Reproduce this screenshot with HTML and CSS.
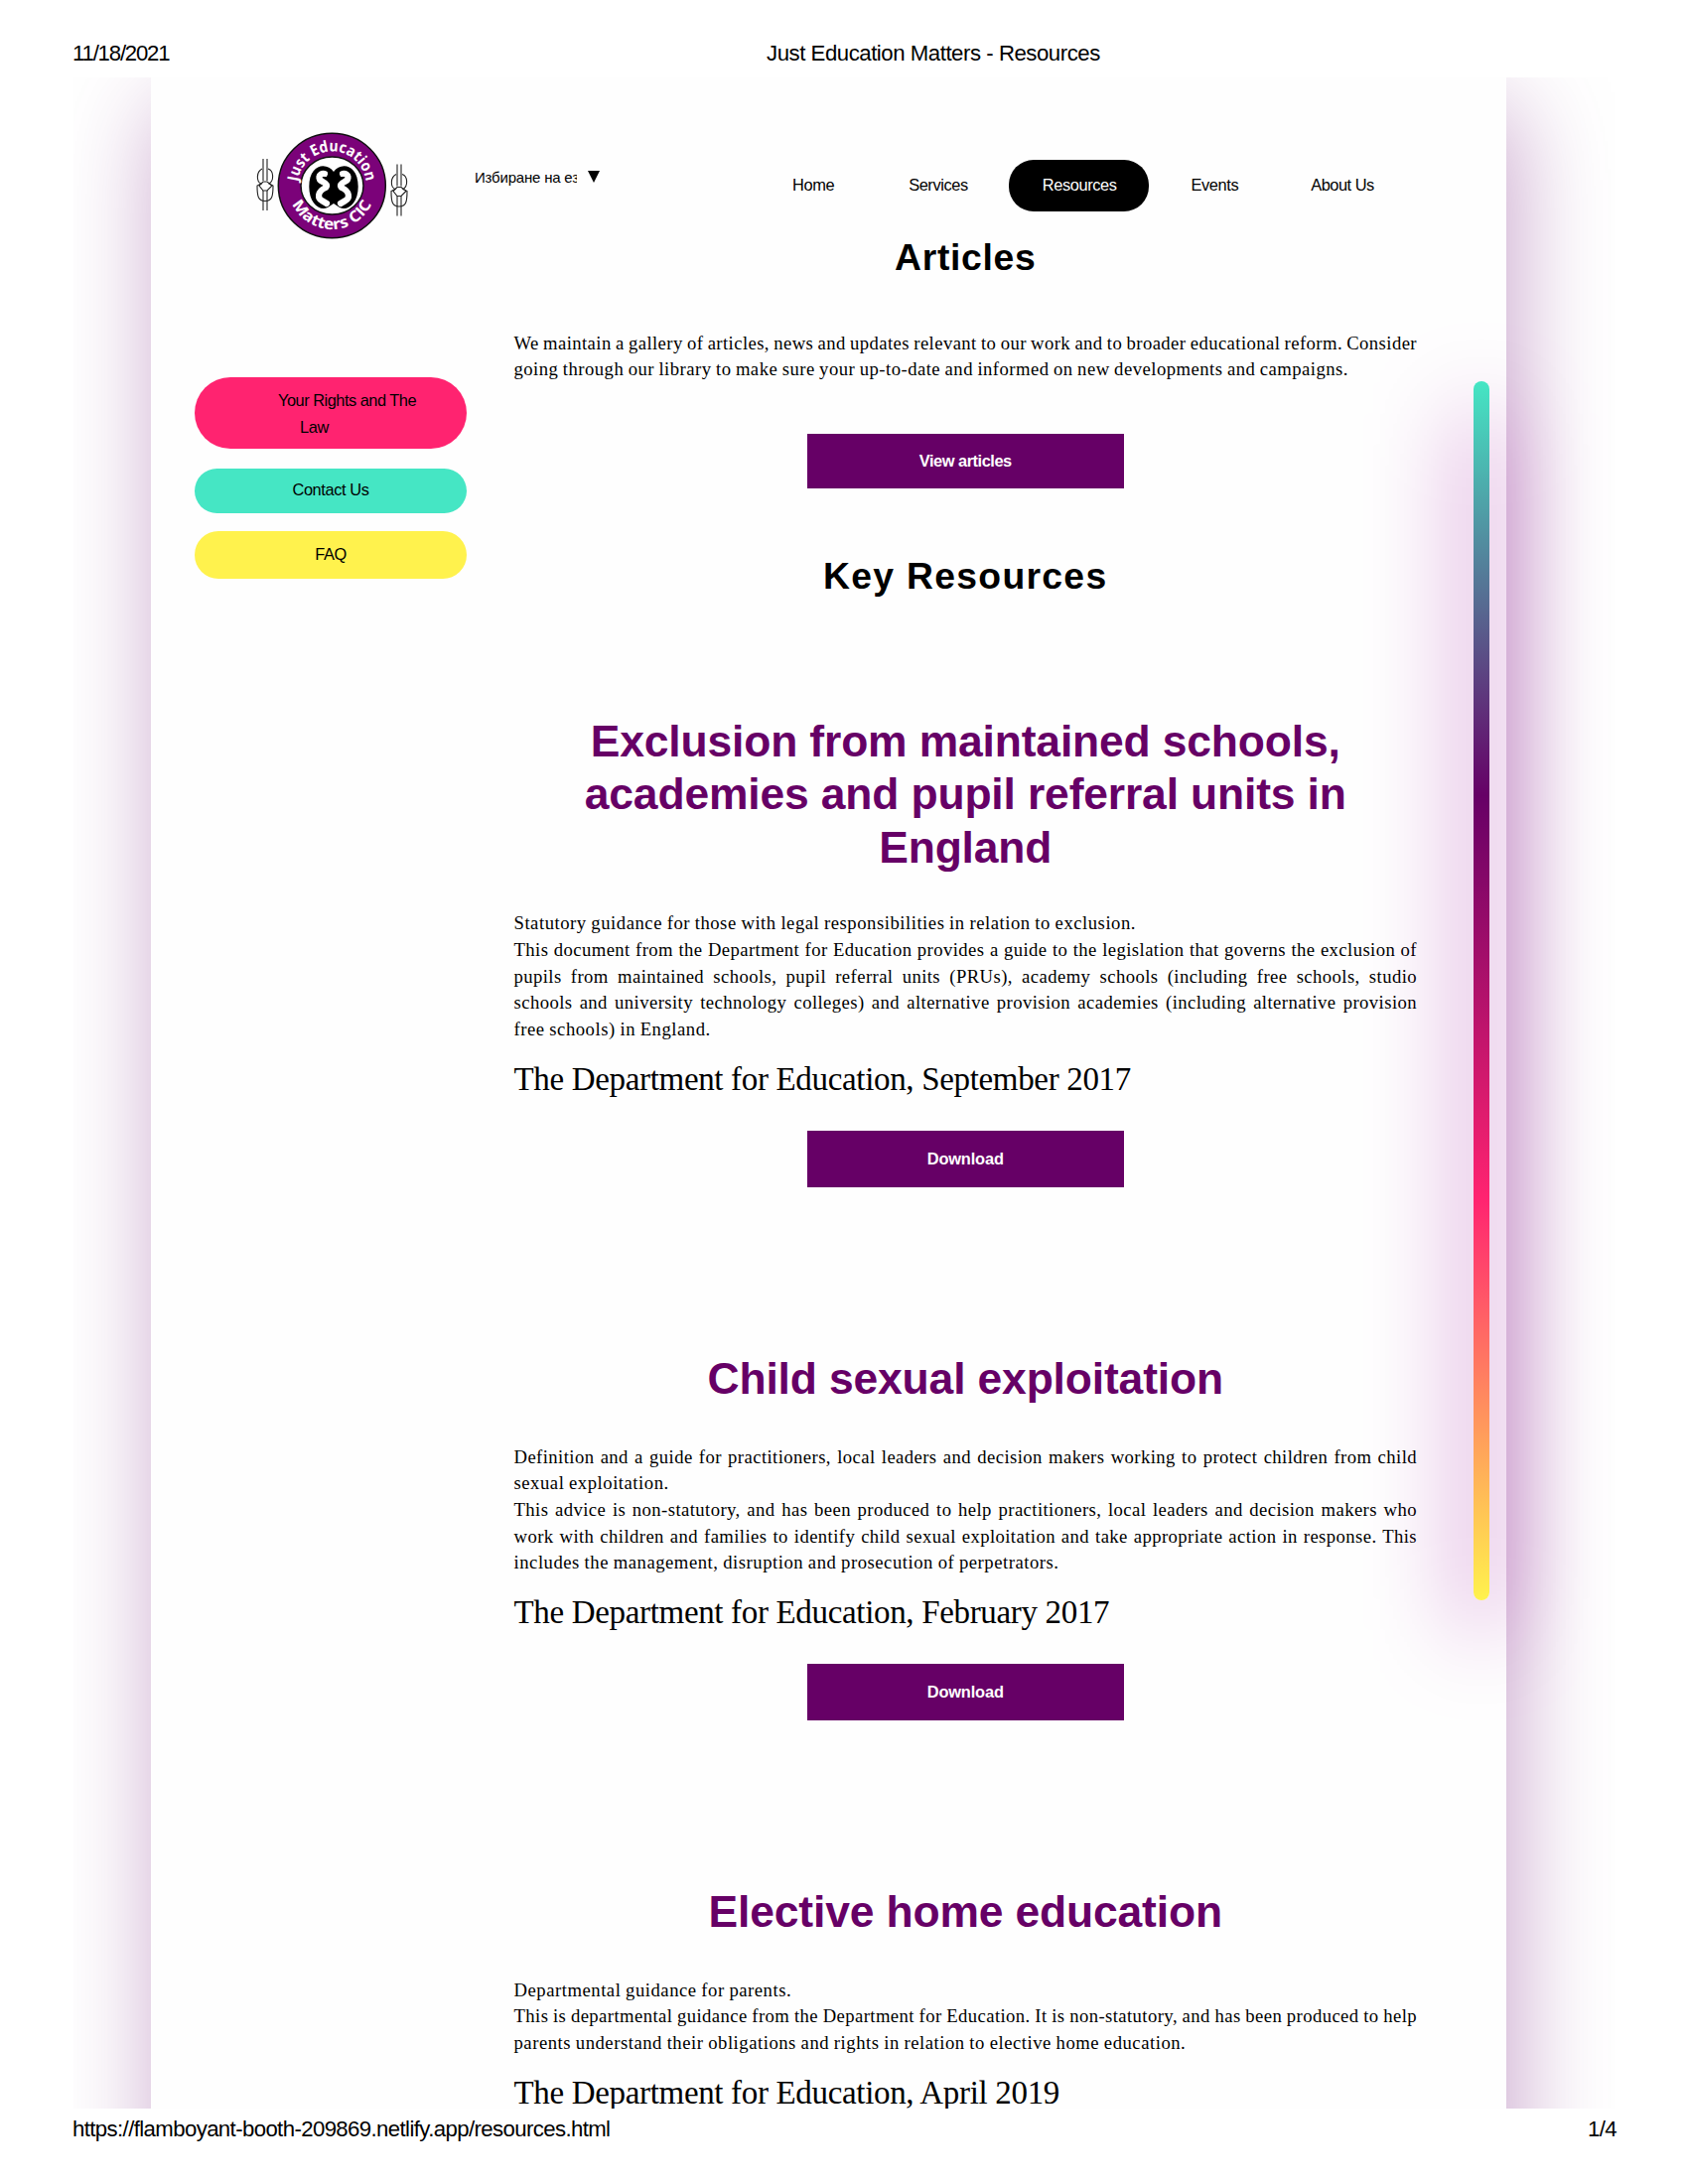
FILE: index.html
```html
<!DOCTYPE html>
<html lang="en">
<head>
<meta charset="utf-8">
<title>Just Education Matters - Resources</title>
<link rel="stylesheet" href="styles.css">
</head>
<body>
<header class="print-head"><span class="date">11/18/2021</span><span class="doc-title">Just Education Matters - Resources</span></header>
<main class="sheet">
  <div class="panel">
    <div class="topbar">
      <svg class="logo" width="156" height="112" viewBox="0 0 156 112" aria-label="Just Education Matters CIC">
        <defs>
          <path id="arc-top" d="M41.800 55A34.500 34.500 0 0 1 110.800 55"/>
          <path id="arc-bottom" d="M32.300 55A44 44 0 0 0 120.300 55"/>
        </defs>
        <ellipse cx="76.300" cy="55" rx="54" ry="52.700" fill="#7b0279" stroke="#111" stroke-width="1.500"/>
        <ellipse cx="76.500" cy="55" rx="31.500" ry="29" fill="#fff" stroke="#111" stroke-width="1.500"/>
        <path d="M78 41C71 31 53.300 33 53.300 56C53.300 73 64 81 72 77L78 73L84 77C92 81 102.700 73 102.700 56C102.700 33 85 31 78 41Z" fill="#000"/>
        <path d="M69 43C62 42 62 49 67 51Q73 54 70 57C61 61 62 68 66 70L71 73M87 43C94 42 94 49 89 51Q83 54 86 57C95 61 94 68 90 70L85 73" fill="none" stroke="#fff" stroke-width="6.200" stroke-linejoin="round" stroke-linecap="round"/>
        <g class="logo-text">
          <text><textPath href="#arc-top" startOffset="4" textLength="100" lengthAdjust="spacingAndGlyphs">Just Education</textPath></text>
          <text><textPath href="#arc-bottom" startOffset="19" textLength="100" lengthAdjust="spacingAndGlyphs">Matters CIC</textPath></text>
        </g>
        <g fill="none" stroke="#222" stroke-width="1.100">
          <g id="knot">
            <path d="M7 28V50M11 28V50M7 60V80M11 60V80"/>
            <path d="M6 38C0 41 0 51 5 53L1 55C1 66 2 70 9 70.500C16 70 17 66 17 55L13 53C18 50 18 40 12 38"/>
            <path d="M3 55L7 51H11L16 55L11 60H7Z"/>
          </g>
          <use href="#knot" x="135" y="5.500"/>
        </g>
      </svg>
      <div class="language"><span class="language-name">Избиране на ез</span><svg width="12" height="12" viewBox="0 0 12 12"><path d="M0 0H12L6 12Z"/></svg></div>
      <nav class="nav"><a>Home</a><a>Services</a><a class="active">Resources</a><a>Events</a><a>About Us</a></nav>
    </div>
    <div class="columns">
      <aside class="side">
        <a class="pill pink"><span class="rights">Your Rights and The</span><span class="law">Law</span></a>
        <a class="pill teal">Contact Us</a>
        <a class="pill yellow">FAQ</a>
      </aside>
      <div class="content">
        <h1 class="articles">Articles</h1>
        <p class="intro"><span class="full">We maintain a gallery of articles, news and updates relevant to our work and to broader educational reform. Consider</span><span class="last tight">going through our library to make sure your up-to-date and informed on new developments and campaigns.</span></p>
        <a class="button view">View articles</a>
        <h1 class="key">Key Resources</h1>
        <section class="first">
          <h2>Exclusion from maintained schools,<br>academies and pupil referral units in<br>England</h2>
          <p><span class="last">Statutory guidance for those with legal responsibilities in relation to exclusion.</span><span class="full">This document from the Department for Education provides a guide to the legislation that governs the exclusion of</span><span class="full">pupils from maintained schools, pupil referral units (PRUs), academy schools (including free schools, studio</span><span class="full">schools and university technology colleges) and alternative provision academies (including alternative provision</span><span class="last">free schools) in England.</span></p>
          <div class="source">The Department for Education, September 2017</div>
          <a class="button">Download</a>
        </section>
        <section>
          <h2>Child sexual exploitation</h2>
          <p><span class="full">Definition and a guide for practitioners, local leaders and decision makers working to protect children from child</span><span class="last">sexual exploitation.</span><span class="full">This advice is non-statutory, and has been produced to help practitioners, local leaders and decision makers who</span><span class="full">work with children and families to identify child sexual exploitation and take appropriate action in response. This</span><span class="last">includes the management, disruption and prosecution of perpetrators.</span></p>
          <div class="source">The Department for Education, February 2017</div>
          <a class="button">Download</a>
        </section>
        <section>
          <h2>Elective home education</h2>
          <p><span class="last">Departmental guidance for parents.</span><span class="full">This is departmental guidance from the Department for Education. It is non-statutory, and has been produced to help</span><span class="last">parents understand their obligations and rights in relation to elective home education.</span></p>
          <div class="source">The Department for Education, April 2019</div>
        </section>
      </div>
      <div class="stripe"></div>
    </div>
  </div>
</main>
<footer class="print-foot"><span>https://flamboyant-booth-209869.netlify.app/resources.html</span><span>1/4</span></footer>
</body>
</html>
```
FILE: styles.css
```css
* { box-sizing: border-box; }
body { margin: 0; width: 1700px; height: 2200px; overflow: hidden; background: #fff; color: #000; font-family: "Liberation Sans", Arial, sans-serif; }
.print-head { height: 78px; padding: 38.500px 0 0 73px; display: flex; font-size: 22.2px; line-height: 30px; letter-spacing: -.46px; }
.date { width: 699px; letter-spacing: -1.2px; }
.sheet { height: 2046px; margin: 0 74px; overflow: hidden; }
.panel { width: 1365px; height: 2120px; margin-left: 78px; background: #fefefe; box-shadow: 8px 31px 93px rgba(102, 0, 110, .36); }
.topbar { height: 161px; display: flex; align-items: flex-start; padding-left: 106px; }
.logo { flex: none; margin-top: 54px; }
.logo-text { fill: #fff; font: bold 15.5px "Open Sans", sans-serif; }
.language { display: flex; gap: 11px; margin: 91px 0 0 64px; width: 160px; flex: none; }
.language-name { width: 103px; overflow: hidden; white-space: nowrap; font-size: 15px; line-height: 20px; letter-spacing: -.2px; }
.language svg { margin-top: 3px; }
.nav { display: flex; gap: 7px; margin: 83px 0 0 126px; font-size: 16.4px; line-height: 51px; letter-spacing: -.4px; white-space: nowrap; }
.nav a { padding: 0 34px; }
.nav a:last-child { margin-left: -2px; letter-spacing: -.5px; }
.nav .active { height: 52px; background: #000; color: #fff; border-radius: 25px; padding-right: 32px; margin-right: 2px; }
.columns { display: flex; }
.side { width: 274px; margin: 141px 47.500px 0 44px; font-size: 16.4px; letter-spacing: -.4px; }
.pill { display: block; text-align: center; }
.pill span { display: block; text-align: left; }
.pink { height: 71.500px; padding-top: 10px; border-radius: 36px; background: #ff2370; line-height: 26.67px; }
.rights { padding-left: 84px; letter-spacing: -.5px; }
.law { padding-left: 106px; }
.teal { height: 45px; margin-top: 20.500px; border-radius: 22.500px; background: #45e6c4; line-height: 43px; }
.yellow { height: 47.500px; margin-top: 18px; border-radius: 24px; background: #fff24d; line-height: 47px; }
.content { width: 909.500px; }
h1, h2, p { margin: 0; }
h1 { text-align: center; font-size: 37.3px; line-height: 40px; letter-spacing: 1.3px; }
.articles { letter-spacing: .7px; }
h2 { text-align: center; font-size: 44.4px; line-height: 53.33px; letter-spacing: -.14px; color: #606; margin: 166px 0 39.500px; white-space: nowrap; }
.first h2 { margin: 120px 0 37.500px; }
p { font: 18.66px/26.67px "Liberation Serif", "Times New Roman", serif; }
.intro { margin-top: 53.500px; }
p span { display: block; white-space: nowrap; }
.full { letter-spacing: .42px; word-spacing: -1px; text-align-last: justify; }
.last { letter-spacing: .53px; word-spacing: -.5px; }
.last.tight { letter-spacing: .48px; word-spacing: -.7px; }
.source { margin-top: 16px; font: 33px/40px "Liberation Serif", "Times New Roman", serif; letter-spacing: -.33px; white-space: nowrap; }
.button { display: block; width: 319px; height: 57px; margin: 32px auto 0; background: #606; color: #fff; font-weight: bold; font-size: 16.4px; line-height: 57px; letter-spacing: -.16px; text-align: center; }
.view { height: 55.500px; line-height: 55px; margin-top: 51px; margin-bottom: 68px; letter-spacing: -.46px; }
.key + .first h2 { margin-top: 119.500px; }
.stripe { width: 16px; height: 1228px; margin: 145px 0 0 57px; border-radius: 8px; background: linear-gradient(#45e6c4, #606 34%, #ff2370 67%, #fff24d); box-shadow: 0 31px 93px #990099; }
.print-foot { display: flex; justify-content: space-between; padding: 6px 72px 0 73px; font-size: 22.2px; line-height: 30px; letter-spacing: -.61px; }
```
